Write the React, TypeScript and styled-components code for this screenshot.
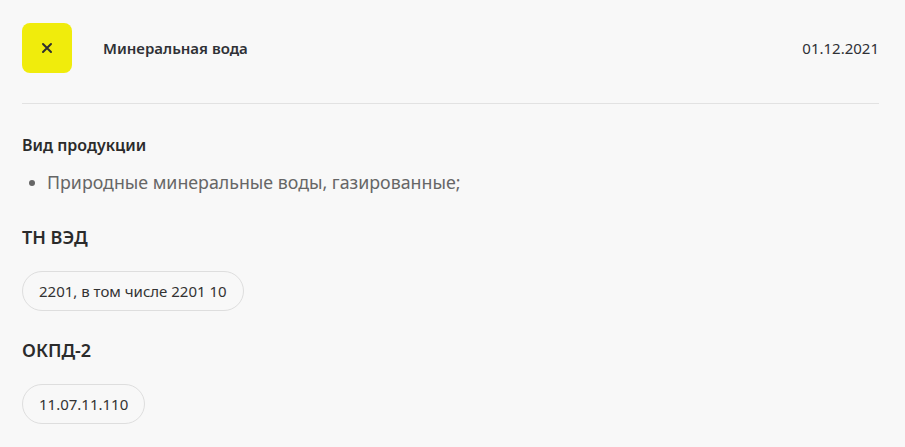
import React from 'react'
import styled, { createGlobalStyle } from 'styled-components'

const Global = createGlobalStyle`
  body {
    margin: 0;
    background: #f8f8f8;
    font-family: "Noto Sans", Lato, sans-serif;
    color: #2b2b2b;
  }
`

const CloseIcon = () => (
  <svg width="12" height="12" viewBox="0 0 12 12">
    <path d="M2 2 L10 10 M10 2 L2 10" stroke="#2f2f2f" strokeWidth="2" strokeLinecap="round" />
  </svg>
)

type Section = { title: string; kind: 'list' | 'chips'; items: string[] }

const sections: Section[] = [
  { title: 'Вид продукции', kind: 'list', items: ['Природные минеральные воды, газированные;'] },
  { title: 'ТН ВЭД', kind: 'chips', items: ['2201, в том числе 2201 10'] },
  { title: 'ОКПД-2', kind: 'chips', items: ['11.07.11.110'] },
]

const App: React.FC = () => {
  return (
    <>
      <Global />
      <Page>
        <Header>
          <CloseButton>
            <CloseIcon />
          </CloseButton>
          <Title>Минеральная вода</Title>
          <DateText>01.12.2021</DateText>
        </Header>
        <Body>
          {sections.map((s) => (
            <Block key={s.title} small={s.kind === 'list'}>
              <BlockTitle small={s.kind === 'list'}>{s.title}</BlockTitle>
              {s.kind === 'list' ? (
                <List>
                  {s.items.map((i) => (
                    <ListItem key={i}>{i}</ListItem>
                  ))}
                </List>
              ) : (
                <Chips>
                  {s.items.map((i) => (
                    <Chip key={i}>{i}</Chip>
                  ))}
                </Chips>
              )}
            </Block>
          ))}
        </Body>
      </Page>
    </>
  )
}

export default App

const Page = styled.div`
  padding: 23px 26px 0 22px;
`

const Header = styled.div`
  display: flex;
  align-items: center;
  padding-bottom: 30px;
  border-bottom: 1px solid #e2e2e2;
`

const CloseButton = styled.div`
  width: 50px;
  height: 50px;
  border-radius: 8px;
  background: #f0ec0c;
  display: flex;
  align-items: center;
  justify-content: center;
  flex-shrink: 0;
`

const Title = styled.div`
  margin-left: 31px;
  font-size: 15px;
  font-weight: 600;
  color: #2f3136;
  flex: 1;
`

const DateText = styled.div`
  font-size: 15px;
  color: #2f3136;
`

const Body = styled.div`
  display: flex;
  flex-direction: column;
  padding-top: 29px;
  gap: 30px;
  & > *:last-child {
    margin-top: -3px;
  }
`

const Block = styled.div<{ small?: boolean }>`
  display: flex;
  flex-direction: column;
  gap: ${({ small }) => (small ? '12px' : '22px')};
`

const BlockTitle = styled.div<{ small?: boolean }>`
  font-size: ${({ small }) => (small ? '16px' : '18px')};
  font-weight: 600;
  color: #2b2b2b;
  line-height: 24px;
`

const List = styled.ul`
  margin: 0;
  padding: 0;
  list-style: none;
`

const ListItem = styled.li`
  position: relative;
  padding-left: 25px;
  font-size: 17.8px;
  line-height: 26px;
  color: #666;
  &::before {
    content: '';
    position: absolute;
    left: 7px;
    top: 11px;
    width: 6px;
    height: 6px;
    border-radius: 50%;
    background: #666;
  }
`

const Chips = styled.div`
  display: flex;
  flex-wrap: wrap;
  gap: 8px;
`

const Chip = styled.div`
  height: 40px;
  box-sizing: border-box;
  padding: 0 16px;
  border: 1px solid #dedede;
  border-radius: 20px;
  display: flex;
  align-items: center;
  font-size: 15px;
  color: #333;
`
